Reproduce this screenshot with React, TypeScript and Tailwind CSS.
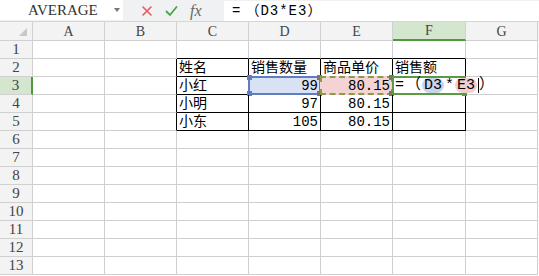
import React from "react";

const cols = ["A", "B", "C", "D", "E", "F", "G"];
const widths = ["w-[72px]", "w-[72px]", "w-[72px]", "w-[72px]", "w-[72px]", "w-[73px]", "w-[72px]"];

const serif = { fontFamily: '"Liberation Serif", "Noto Sans CJK SC", serif' };

// row -> col index -> content
const data: Record<number, Record<number, { text: string; right?: boolean }>> = {
  2: { 2: { text: "姓名" }, 3: { text: "销售数量" }, 4: { text: "商品单价" }, 5: { text: "销售额" } },
  3: { 2: { text: "小红" }, 3: { text: "99", right: true }, 4: { text: "80.15", right: true } },
  4: { 2: { text: "小明" }, 3: { text: "97", right: true }, 4: { text: "80.15", right: true } },
  5: { 2: { text: "小东" }, 3: { text: "105", right: true }, 4: { text: "80.15", right: true } },
};

const inTable = (r: number, c: number) => r >= 2 && r <= 5 && c >= 2 && c <= 5;

const Cell = ({ r, c }: { r: number; c: number }) => {
  const d = data[r]?.[c];
  const blackR = inTable(r, c) || inTable(r, c + 1);
  const blackB = inTable(r, c) || inTable(r + 1, c);
  return (
    <div
      className={`relative h-[18px] shrink-0 border-r border-b ${widths[c]} ${blackR ? "border-r-black" : "border-r-[#cfcfcf]"} ${blackB ? "border-b-black" : "border-b-[#cfcfcf]"}`}
    >
      {r === 3 && c === 3 && (
        <div className="absolute -left-px -top-px w-[73px] h-[19px] bg-[#d9e1f4] border-2 border-[#5f7dbf]">
          <span className="absolute -left-[3px] -top-[3px] w-[5px] h-[5px] bg-[#5f7dbf]" />
          <span className="absolute -left-[3px] -bottom-[3px] w-[5px] h-[5px] bg-[#5f7dbf]" />
          <span className="absolute -right-[3px] -top-[3px] w-[5px] h-[5px] bg-[#8a6f66]" />
          <span className="absolute -right-[3px] -bottom-[3px] w-[5px] h-[5px] bg-[#8a6f66]" />
        </div>
      )}
      {r === 3 && c === 4 && (
        <div className="absolute -left-px -top-px w-[73px] h-[19px] bg-[#f3d3d3] border-2 border-dashed border-[#8b9b4a]">
          <span className="absolute -right-[3px] -top-[3px] w-[5px] h-[5px] bg-[#8a6f66]" />
          <span className="absolute -right-[3px] -bottom-[3px] w-[5px] h-[5px] bg-[#8a6f66]" />
        </div>
      )}
      {r === 3 && c === 5 && (
        <div className="absolute -left-px -top-px w-[74px] h-[19px] border-2 border-[#5a9a45] z-10">
          <span className="absolute -right-[3px] -bottom-[3px] w-[5px] h-[5px] bg-[#5a9a45]" />
        </div>
      )}
      {d && (
        <div
          className={`relative z-[1] h-full flex items-center px-[2px] text-[14px] leading-none text-black ${d.right ? "justify-end" : "justify-start"}`}
        >
          {d.text}
        </div>
      )}
      {r === 3 && c === 5 && (
        <div className="absolute left-[2px] top-0 h-full flex items-center text-[15px] leading-none text-black whitespace-nowrap z-20">
          <span>=</span>
          <span className="ml-[2px]">（</span>
          <span className="bg-[#c9d3ee] rounded-full px-[2px] ml-[1px]">D3</span>
          <span className="mx-[1px]">*</span>
          <span className="bg-[#efcfcf] rounded-full px-[2px]">E3</span>
          <span className="inline-block w-px h-[15px] bg-black ml-[1px]" />
          <span>）</span>
        </div>
      )}
    </div>
  );
};

export default function App() {
  return (
    <div
      className="w-[539px] h-[276px] overflow-hidden bg-white select-none"
      style={{ fontFamily: '"Liberation Mono", "Noto Sans CJK SC", monospace' }}
    >
      {/* formula bar */}
      <div className="h-[22px] flex bg-[#f0f1f3] border-b border-[#d6d6d6]">
        <div className="w-[123px] h-[20px] bg-white flex items-center relative">
          <span className="ml-[28px] text-[15px] text-[#333]" style={serif}>
            AVERAGE
          </span>
          <span className="absolute left-[114px] top-[8px] w-0 h-0 border-l-[3px] border-r-[3px] border-t-[4px] border-l-transparent border-r-transparent border-t-[#777]" />
        </div>
        <div className="w-[101px] flex items-center">
          <svg width="12" height="12" viewBox="0 0 12 12" className="ml-[18px]">
            <path d="M2 2L10 10M10 2L2 10" stroke="#e4595a" strokeWidth="1.6" strokeLinecap="round" />
          </svg>
          <svg width="13" height="12" viewBox="0 0 13 12" className="ml-[12px]">
            <path d="M1.5 6.5L5 10L11.5 2" stroke="#48a447" strokeWidth="1.8" fill="none" strokeLinecap="round" />
          </svg>
          <span className="ml-[12px] text-[16px] italic text-[#666]" style={serif}>
            fx
          </span>
        </div>
        <div className="flex-1 h-[20px] mt-[1px] bg-white flex items-center pl-[8px] text-[14px] text-black tracking-[1px]">
          <span>=</span>
          <span className="ml-[4px]">（</span>
          <span>D3*E3</span>
          <span>）</span>
        </div>
      </div>
      {/* column headers */}
      <div className="flex h-[19px] bg-[#f3f3f3]">
        <div className="w-[33px] h-full shrink-0 border-r border-b border-[#d0d0d0] relative">
          <span
            className="absolute right-[5px] bottom-[4px] w-0 h-0"
            style={{ borderBottom: "8px solid #c8c8c8", borderLeft: "8px solid transparent" }}
          />
        </div>
        {cols.map((c, i) => (
          <div
            key={c}
            style={serif}
            className={`h-full shrink-0 flex items-center justify-center text-[14px] text-[#444] border-r border-[#d0d0d0] ${widths[i]} ${c === "F" ? "bg-[#d5e6cf] border-b-2 border-b-[#4f9a3e]" : "border-b border-b-[#d0d0d0]"}`}
          >
            {c}
          </div>
        ))}
      </div>
      {/* rows */}
      {Array.from({ length: 13 }, (_, i) => i + 1).map((r) => (
        <div key={r} className="flex h-[18px]">
          <div
            style={serif}
            className={`w-[33px] h-full shrink-0 flex items-center justify-center text-[15px] text-[#444] border-b border-b-[#d0d0d0] ${r === 3 ? "bg-[#d5e6cf] border-r-2 border-r-[#4f9a3e]" : "bg-[#f3f3f3] border-r border-r-[#d0d0d0]"}`}
          >
            {r}
          </div>
          {cols.map((_, c) => (
            <Cell key={c} r={r} c={c} />
          ))}
        </div>
      ))}
    </div>
  );
}
